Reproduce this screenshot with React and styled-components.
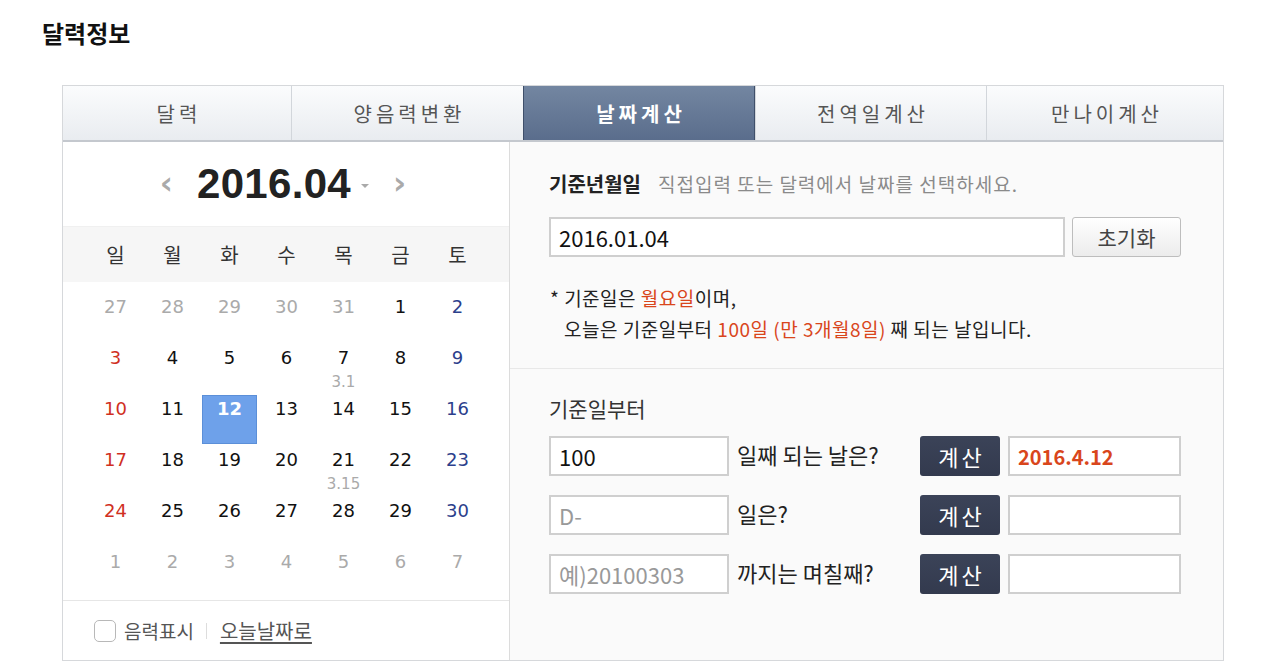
import styled, { createGlobalStyle } from "styled-components";

const GlobalStyle = createGlobalStyle`
  body {
    margin: 0;
    background: #fff;
    font-family: "Noto Sans CJK KR", "Noto Sans", sans-serif;
  }
  * { box-sizing: border-box; }
`;

const Page = styled.div`
  padding: 17px 0 0 42px;
  width: 1280px;
  height: 672px;
  overflow: hidden;
`;

const Title = styled.h2`
  margin: 0 0 37px;
  font-size: 24px;
  line-height: 31px;
  font-weight: 700;
  color: #111;
`;

const Widget = styled.div`
  margin-left: 20px;
  width: 1162px;
  border: 1px solid #d6d8db;
`;

const Tabs = styled.div`
  display: grid;
  grid-template-columns: 228px 232px 232px 231px 1fr;
  height: 56px;
  border-bottom: 2px solid #c4c8ce;
`;

const Tab = styled.div`
  display: flex;
  align-items: center;
  justify-content: center;
  padding-left: 4px;
  font-size: 20px;
  letter-spacing: 4px;
  color: ${(p) => (p.$active ? "#fff" : "#555")};
  font-weight: ${(p) => (p.$active ? 700 : 400)};
  background: ${(p) =>
    p.$active
      ? "linear-gradient(#7386a1, #5a6d8c)"
      : "linear-gradient(#fbfcfd, #e9ecf0)"};
  border-left: 1px solid ${(p) => (p.$active ? "#3f4f6a" : "#d2d6db")};
  border-right: ${(p) => (p.$active ? "1px solid #3f4f6a" : "none")};
  &:first-child { border-left: none; }
`;

const Body = styled.div`
  display: grid;
  grid-template-columns: 447px 1fr;
  height: 518px;
`;

const CalendarPanel = styled.div`
  display: flex;
  flex-direction: column;
  border-right: 1px solid #dcdcdc;
  background: #fff;
`;

const MonthHeader = styled.div`
  height: 84px;
  display: flex;
  align-items: center;
  justify-content: center;
  padding-right: 6px;
`;

const NavArrow = styled.span`
  color: #aaa;
  font-family: "DejaVu Sans", sans-serif;
  font-size: 32px;
  font-weight: 700;
  line-height: 1;
  margin: ${(p) => p.$m};
`;

const MonthTitle = styled.span`
  font-family: "Liberation Sans", Arial, sans-serif;
  font-size: 42px;
  font-weight: 700;
  letter-spacing: 0.3px;
  color: #222;
`;

const Caret = styled.span`
  width: 0;
  height: 0;
  border-left: 4px solid transparent;
  border-right: 4px solid transparent;
  border-top: 4px solid #aaa;
  margin: 4px 0 0 10px;
`;

const WeekRow = styled.div`
  display: grid;
  grid-template-columns: repeat(7, 57px);
  padding-left: 24px;
  height: 56px;
  align-items: center;
  background: #f6f6f6;
  border-top: 1px solid #f0f0f0;
`;

const WeekDay = styled.span`
  text-align: center;
  font-size: 20px;
  color: #333;
`;

const DayGrid = styled.div`
  display: grid;
  grid-template-columns: repeat(7, 57px);
  grid-auto-rows: 51px;
  padding: 10px 0 0 24px;
  height: 318px;
`;

const DayCell = styled.div`
  margin: 1px;
  display: flex;
  flex-direction: column;
  align-items: center;
  padding-top: 2px;
  background: ${(p) => (p.$selected ? "#6ea1ea" : "transparent")};
  border: 1px solid ${(p) => (p.$selected ? "#5b8fd8" : "transparent")};
`;

const DayNum = styled.span`
  font-family: "DejaVu Sans", Verdana, sans-serif;
  font-size: 18px;
  line-height: 22px;
  font-weight: ${(p) => (p.$selected ? 700 : 400)};
  color: ${(p) => p.$color};
`;

const Lunar = styled.span`
  margin-top: 4px;
  font-family: "DejaVu Sans", Verdana, sans-serif;
  font-size: 15px;
  line-height: 18px;
  color: #aaa;
`;

const CalFooter = styled.div`
  flex: 1;
  border-top: 1px solid #e6e6e6;
  display: flex;
  align-items: center;
  padding-left: 31px;
  font-size: 19px;
  color: #555;
`;

const CheckBox = styled.span`
  width: 22px;
  height: 22px;
  border: 1px solid #b8b8b8;
  border-radius: 5px;
  background: #fff;
  margin-right: 8px;
`;

const Sep = styled.span`
  width: 1px;
  height: 16px;
  background: #ddd;
  margin: 0 13px 0 12px;
`;

const TodayLink = styled.a`
  color: #555;
  font-size: 20px;
  text-decoration: underline;
  text-underline-offset: 3px;
`;

const RightPanel = styled.div`
  background: #fafafa;
  display: flex;
  flex-direction: column;
`;

const BaseSection = styled.div`
  height: 227px;
  border-bottom: 1px solid #e8e8e8;
  padding: 29px 0 0 39px;
`;

const LabelLine = styled.div`
  display: flex;
  align-items: baseline;
  gap: 17px;
  line-height: 26px;
`;

const StrongLabel = styled.span`
  font-size: 20px;
  font-weight: 700;
  color: #222;
`;

const Hint = styled.span`
  font-size: 19px;
  letter-spacing: 1px;
  color: #8a8a8a;
`;

const InputLine = styled.div`
  display: flex;
  gap: 7px;
  margin-top: 20px;
`;

const TextBox = styled.div`
  width: ${(p) => p.$w}px;
  height: 40px;
  border: 2px solid #cfcfcf;
  background: #fff;
  display: flex;
  align-items: center;
  padding-left: 8px;
  font-size: ${(p) => (p.$bold ? 20 : 22)}px;
  color: ${(p) => p.$color || "#111"};
  font-weight: ${(p) => (p.$bold ? 700 : 400)};
`;

const ResetButton = styled.div`
  width: 109px;
  height: 40px;
  border: 1px solid #bdbdbd;
  border-radius: 3px;
  background: linear-gradient(#fff, #ececec);
  display: flex;
  align-items: center;
  justify-content: center;
  font-size: 21px;
  color: #444;
`;

const Note = styled.p`
  margin: 25px 0 0 1px;
  font-size: 19px;
  letter-spacing: 0.5px;
  line-height: 31px;
  color: #222;
`;

const Indent = styled.span`
  padding-left: 14px;
`;

const Accent = styled.span`
  color: #d9461c;
`;

const CalcSection = styled.div`
  padding: 26px 0 0 39px;
`;

const SubLabel = styled.div`
  font-size: 21px;
  color: #333;
  line-height: 26px;
  margin-bottom: 15px;
`;

const CalcRows = styled.div`
  display: flex;
  flex-direction: column;
  gap: 19px;
`;

const CalcRow = styled.div`
  display: grid;
  grid-template-columns: 180px 175px 80px 173px;
  column-gap: 8px;
  align-items: center;
  height: 40px;
`;

const Question = styled.span`
  font-size: 22px;
  color: #222;
  margin-top: -4px;
  white-space: nowrap;
`;

const CalcButton = styled.div`
  height: 40px;
  width: 80px;
  border-radius: 3px;
  background: linear-gradient(#3b4358, #333a4e);
  color: #fff;
  font-size: 22px;
  letter-spacing: 3px;
  padding-left: 3px;
  display: flex;
  align-items: center;
  justify-content: center;
`;

const days = [
  [27, "prev"], [28, "prev"], [29, "prev"], [30, "prev"], [31, "prev"], [1], [2],
  [3], [4], [5], [6], [7, null, "3.1"], [8], [9],
  [10], [11], [12, "sel"], [13], [14], [15], [16],
  [17], [18], [19], [20], [21, null, "3.15"], [22], [23],
  [24], [25], [26], [27], [28], [29], [30],
  [1, "next"], [2, "next"], [3, "next"], [4, "next"], [5, "next"], [6, "next"], [7, "next"],
];

function dayColor(i, kind) {
  if (kind === "prev" || kind === "next") return "#aaa";
  if (kind === "sel") return "#fff";
  if (i % 7 === 0) return "#d0301f";
  if (i % 7 === 6) return "#2c3f8c";
  return "#111";
}

const tabs = ["달력", "양음력변환", "날짜계산", "전역일계산", "만나이계산"];

const rows = [
  { value: "100", placeholder: false, q: "일째 되는 날은?", result: "2016.4.12" },
  { value: "D-", placeholder: true, q: "일은?", result: "" },
  { value: "예)20100303", placeholder: true, q: "까지는 며칠째?", result: "" },
];

export default function App() {
  return (
    <Page>
      <GlobalStyle />
      <Title>달력정보</Title>
      <Widget>
        <Tabs>
          {tabs.map((t) => (
            <Tab key={t} $active={t === "날짜계산"}>{t}</Tab>
          ))}
        </Tabs>
        <Body>
          <CalendarPanel>
            <MonthHeader>
              <NavArrow $m="-3px 24px 0 0">‹</NavArrow>
              <MonthTitle>2016.04</MonthTitle>
              <Caret />
              <NavArrow $m="-3px 0 0 24px">›</NavArrow>
            </MonthHeader>
            <WeekRow>
              {["일", "월", "화", "수", "목", "금", "토"].map((d) => (
                <WeekDay key={d}>{d}</WeekDay>
              ))}
            </WeekRow>
            <DayGrid>
              {days.map(([n, kind, lunar], i) => (
                <DayCell key={i} $selected={kind === "sel"}>
                  <DayNum $selected={kind === "sel"} $color={dayColor(i, kind)}>{n}</DayNum>
                  {lunar && <Lunar>{lunar}</Lunar>}
                </DayCell>
              ))}
            </DayGrid>
            <CalFooter>
              <CheckBox />
              음력표시
              <Sep />
              <TodayLink>오늘날짜로</TodayLink>
            </CalFooter>
          </CalendarPanel>
          <RightPanel>
            <BaseSection>
              <LabelLine>
                <StrongLabel>기준년월일</StrongLabel>
                <Hint>직접입력 또는 달력에서 날짜를 선택하세요.</Hint>
              </LabelLine>
              <InputLine>
                <TextBox $w={516}>2016.01.04</TextBox>
                <ResetButton>초기화</ResetButton>
              </InputLine>
              <Note>
                * 기준일은 <Accent>월요일</Accent>이며,
                <br />
                <Indent>
                  오늘은 기준일부터 <Accent>100일 (만 3개월8일)</Accent> 째 되는 날입니다.
                </Indent>
              </Note>
            </BaseSection>
            <CalcSection>
              <SubLabel>기준일부터</SubLabel>
              <CalcRows>
                {rows.map((r) => (
                  <CalcRow key={r.q}>
                    <TextBox $w={180} $color={r.placeholder ? "#999" : "#111"}>{r.value}</TextBox>
                    <Question>{r.q}</Question>
                    <CalcButton>계산</CalcButton>
                    <TextBox $w={173} $color="#d9461c" $bold>{r.result}</TextBox>
                  </CalcRow>
                ))}
              </CalcRows>
            </CalcSection>
          </RightPanel>
        </Body>
      </Widget>
    </Page>
  );
}
